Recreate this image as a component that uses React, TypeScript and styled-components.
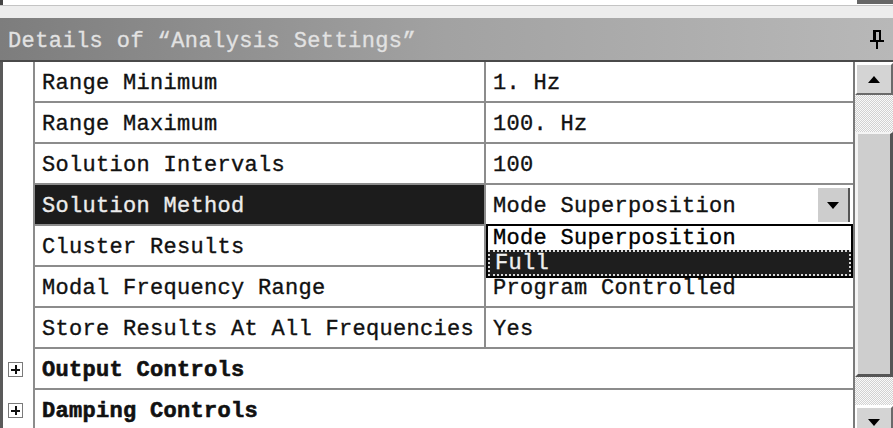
import styled, { createGlobalStyle } from "styled-components"

const GlobalStyle = createGlobalStyle`
    html, body {
        margin: 0;
        padding: 0;
        background: #fff;
    }
    body {
        font-family: "Liberation Mono", "DejaVu Sans Mono", monospace;
    }
`

const Page = styled.div`
    width: 893px;
    height: 428px;
    overflow: hidden;
    display: flex;
    flex-direction: column;
    background: #fff;
`

const TopStrip = styled.div`
    height: 18px;
    display: flex;
    flex-direction: column;
    flex-shrink: 0;

    .upper {
        height: 5px;
        display: flex;
        justify-content: space-between;
        background: #fff;
        border-bottom: 1px solid #c4c4c4;
    }
    .upper span:first-child {
        width: 3px;
        background: #444;
    }
    .upper span:last-child {
        width: 36px;
        height: 4px;
        background: #666;
    }
    .lower {
        flex: 1;
        background: #ededed;
    }
`

const TitleBar = styled.div`
    height: 44px;
    box-sizing: border-box;
    flex-shrink: 0;
    padding: 5px 9px 0 8px;

    display: flex;
    align-items: center;
    justify-content: space-between;

    background: linear-gradient(to right, #7d7d7d 0%, #a2a2a2 50%, #b8b8b8 100%);
    border-bottom: 2px solid #4a4a4a;

    color: #e2e2e2;
    font-size: 22px;
    line-height: 24px;
    letter-spacing: 0.4px;
    -webkit-text-stroke: 0.3px #e2e2e2;
    white-space: pre;

    svg {
        margin-top: -4px;
    }
`

const Body = styled.div`
    flex: 1;
    display: flex;
    min-height: 0;
`

const Grid = styled.div`
    flex: 1;
    display: flex;
    flex-direction: column;
    border-right: 2px solid #7a7a7a;
`

const Row = styled.div`
    height: 41px;
    display: flex;
    flex-shrink: 0;
`

const Gutter = styled.div`
    width: 35px;
    box-sizing: border-box;
    border-left: 3px solid #5a5a5a;
    border-right: 2px solid #8c8c8c;
    background: #fff;

    display: flex;
    align-items: center;
    padding-left: 5px;
`

const Cell = styled.div<{ $wide?: boolean; $selected?: boolean; $bold?: boolean }>`
    position: relative;
    box-sizing: border-box;
    ${p => p.$wide ? "flex: 1;" : "width: 451px; border-right: 2px solid #8c8c8c;"}
    border-bottom: 2px solid #8c8c8c;
    padding: 4px 0 0 7px;

    display: flex;
    align-items: center;

    background: ${p => p.$selected ? "#1c1c1c" : "#fff"};
    color: ${p => p.$selected ? "#ececec" : "#111"};
    font-size: 22px;
    line-height: 24px;
    font-weight: ${p => p.$bold ? 700 : 400};
    letter-spacing: 0.3px;
    -webkit-text-stroke: ${p => p.$bold ? 0.6 : 0.35}px currentColor;
    white-space: pre;
`

const ValueCell = styled(Cell)`
    flex: 1;
    width: auto;
    border-right: none;
`

const Expander = styled.div`
    width: 15px;
    height: 15px;
    box-sizing: border-box;
    border: 1px solid #7a7a7a;
    background: #fff;
    position: relative;

    &::before, &::after {
        content: "";
        position: absolute;
        background: #111;
    }
    &::before {
        left: 2px;
        right: 2px;
        top: 6px;
        height: 1.5px;
    }
    &::after {
        top: 2px;
        bottom: 2px;
        left: 6px;
        width: 1.5px;
    }
`

const ComboButton = styled.div`
    position: absolute;
    right: 3px;
    top: 3px;
    bottom: 2px;
    width: 30px;
    background: #cdcdcd;
    border-right: 2px solid #555;

    display: flex;
    align-items: center;
    justify-content: center;
`

const DropList = styled.div`
    position: absolute;
    left: 0;
    right: 0;
    top: 39px;
    z-index: 2;

    background: #fff;
    border: 2px solid #000;
    box-sizing: border-box;
    display: flex;
    flex-direction: column;
`

const DropItem = styled.div<{ $active?: boolean }>`
    height: ${p => p.$active ? 26 : 24}px;
    box-sizing: border-box;
    padding: 2px 0 0 5px;
    overflow: hidden;

    display: flex;
    align-items: center;

    background: ${p => p.$active ? "#1e1e1e" : "#fff"};
    color: ${p => p.$active ? "#f0f0f0" : "#000"};
    border: ${p => p.$active ? "2px dotted #d8d8d8" : "none"};
    font-size: 22px;
    line-height: 22px;
    letter-spacing: 0.3px;
    -webkit-text-stroke: 0.35px currentColor;
    white-space: pre;
`

const Scrollbar = styled.div`
    width: 38px;
    flex-shrink: 0;
    display: flex;
    flex-direction: column;
`

const ScrollButton = styled.div`
    height: 32px;
    flex-shrink: 0;
    box-sizing: border-box;
    margin-top: 1px;
    background: #d4d4d4;
    border-top: 2px solid #fff;
    border-left: 2px solid #fff;
    border-right: 2px solid #6a6a6a;
    border-bottom: 2px solid #6a6a6a;

    display: flex;
    align-items: center;
    justify-content: center;
`

const Track = styled.div<{ $h: number }>`
    height: ${p => p.$h}px;
    flex-shrink: 0;
    background: repeating-conic-gradient(#d2d2d2 0 25%, #fafafa 0 50%) 0 0 / 2px 2px;
`

const Thumb = styled.div`
    height: 245px;
    flex-shrink: 0;
    box-sizing: border-box;
    background: #cecece;
    border-top: 2px solid #f4f4f4;
    border-left: 3px solid #f4f4f4;
    border-right: 3px solid #555;
    border-bottom: 3px solid #555;
`

function Arrow({ down }: { down?: boolean }) {
    return <svg width="12" height="7" viewBox="0 0 12 7">
        <polygon points={down ? "0,0 12,0 6,7" : "0,7 12,7 6,0"} fill="#000" />
    </svg>
}

function Pin() {
    return <svg width="14" height="20" viewBox="0 0 14 20">
        <rect x="3" y="0" width="8" height="2" fill="#000" />
        <rect x="3" y="0" width="3" height="11" fill="#000" />
        <rect x="9" y="0" width="2" height="11" fill="#000" />
        <rect x="0" y="10" width="14" height="2" fill="#000" />
        <rect x="6" y="12" width="2" height="7" fill="#000" />
    </svg>
}

const rows = [
    { label: "Range Minimum", value: "1. Hz" },
    { label: "Range Maximum", value: "100. Hz" },
    { label: "Solution Intervals", value: "100" },
]

export default function App() {
    return <Page>
        <GlobalStyle />
        <TopStrip>
            <div className="upper"><span /><span /></div>
            <div className="lower" />
        </TopStrip>
        <TitleBar>
            <span>Details of “Analysis Settings”</span>
            <Pin />
        </TitleBar>
        <Body>
            <Grid>
                {rows.map(r => <Row key={r.label}>
                    <Gutter />
                    <Cell>{r.label}</Cell>
                    <ValueCell>{r.value}</ValueCell>
                </Row>)}
                <Row>
                    <Gutter />
                    <Cell $selected>Solution Method</Cell>
                    <ValueCell>
                        Mode Superposition
                        <ComboButton><Arrow down /></ComboButton>
                        <DropList>
                            <DropItem>Mode Superposition</DropItem>
                            <DropItem $active>Full</DropItem>
                        </DropList>
                    </ValueCell>
                </Row>
                <Row>
                    <Gutter />
                    <Cell>Cluster Results</Cell>
                    <ValueCell />
                </Row>
                <Row>
                    <Gutter />
                    <Cell>Modal Frequency Range</Cell>
                    <ValueCell>Program Controlled</ValueCell>
                </Row>
                <Row>
                    <Gutter />
                    <Cell>Store Results At All Frequencies</Cell>
                    <ValueCell>Yes</ValueCell>
                </Row>
                <Row>
                    <Gutter><Expander /></Gutter>
                    <Cell $wide $bold>Output Controls</Cell>
                </Row>
                <Row>
                    <Gutter><Expander /></Gutter>
                    <Cell $wide $bold>Damping Controls</Cell>
                </Row>
            </Grid>
            <Scrollbar>
                <ScrollButton><Arrow /></ScrollButton>
                <Track $h={37} />
                <Thumb />
                <Track $h={28} />
                <ScrollButton><Arrow down /></ScrollButton>
            </Scrollbar>
        </Body>
    </Page>
}
